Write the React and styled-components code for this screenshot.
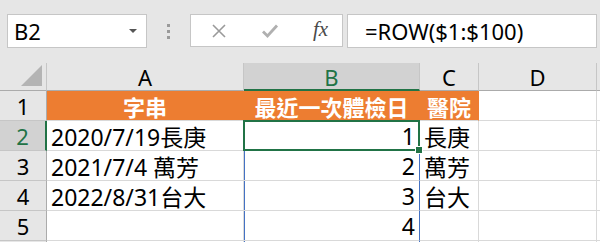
import React from 'react';
import styled, { createGlobalStyle, css } from 'styled-components';

const GlobalStyle = createGlobalStyle`
  html, body {
    margin: 0;
    padding: 0;
    background: #ffffff;
    overflow: hidden;
  }
  body {
    font-family: "Noto Sans", "Noto Sans CJK TC", sans-serif;
  }
`;

const GREEN = '#217346';
const ORANGE = '#ED7D31';
const GRID = '#d9d9d9';

const Window = styled.div`
  width: 600px;
  height: 242px;
  overflow: hidden;
  display: flex;
  flex-direction: column;
`;

/* formula toolbar */
const Toolbar = styled.div`
  height: 63px;
  flex-shrink: 0;
  background: #e6e6e6;
  display: flex;
  align-items: flex-start;
  padding: 14px 0 0 7px;
  box-sizing: border-box;
`;

const NameBox = styled.div`
  width: 140px;
  height: 34px;
  box-sizing: border-box;
  background: #fff;
  border: 1px solid #c6c6c6;
  display: flex;
  align-items: center;
  justify-content: space-between;
  padding: 0 9px 0 6px;
  font-size: 22px;
  color: #000;
`;

const DropArrow = styled.span`
  width: 0;
  height: 0;
  border-left: 4px solid transparent;
  border-right: 4px solid transparent;
  border-top: 4px solid #555;
`;

const Grip = styled.div`
  width: 43px;
  height: 34px;
  display: flex;
  flex-direction: column;
  align-items: center;
  justify-content: center;
  gap: 3px;
`;

const Dot = styled.span`
  width: 3px;
  height: 3px;
  background: #9a9a9a;
`;

const FuncButtons = styled.div`
  width: 153px;
  height: 33px;
  box-sizing: border-box;
  background: #fff;
  border: 1px solid #c6c6c6;
  display: grid;
  grid-template-columns: 53px 50px 1fr;
  align-items: center;
  justify-items: center;
  padding-left: 1px;
`;

const FxLabel = styled.span`
  font-family: "Liberation Serif", "DejaVu Serif", serif;
  font-style: italic;
  font-size: 21px;
  color: #4a4a4a;
  margin-left: 4px;
  margin-top: -2px;
`;

const FormulaInput = styled.div`
  width: 250px;
  height: 34px;
  box-sizing: border-box;
  margin-left: 4px;
  background: #fff;
  border: 1px solid #c6c6c6;
  display: flex;
  align-items: center;
  padding-left: 17px;
  font-size: 22px;
  color: #000;
  white-space: nowrap;
`;

/* sheet */
const Sheet = styled.div`
  display: grid;
  grid-template-columns: 47px 197px 176px 59px 118px 1fr;
  grid-template-rows: 28px repeat(6, 30px);
`;

const Corner = styled.div`
  background: #e6e6e6;
  border-right: 1px solid #c6c6c6;
  border-bottom: 1px solid #ababab;
  position: relative;
  &::after {
    content: '';
    position: absolute;
    right: 4px;
    bottom: 4px;
    width: 0;
    height: 0;
    border-left: 21px solid transparent;
    border-bottom: 21px solid #b4b4b4;
  }
`;

const ColHead = styled.div`
  background: ${p => (p.$active ? '#d2d2d2' : '#e6e6e6')};
  border-right: 1px solid #c6c6c6;
  border-bottom: ${p => (p.$active ? `2px solid ${GREEN}` : '1px solid #ababab')};
  color: ${p => (p.$active ? GREEN : '#000')};
  font-size: 22px;
  line-height: 1;
  display: flex;
  align-items: center;
  justify-content: center;
  padding-top: 1px;
  box-sizing: border-box;
`;

const RowHead = styled.div`
  background: ${p => (p.$active ? '#d2d2d2' : '#e6e6e6')};
  border-right: ${p => (p.$active ? `2px solid ${GREEN}` : '1px solid #ababab')};
  border-bottom: 1px solid #c6c6c6;
  color: ${p => (p.$active ? GREEN : '#000')};
  font-size: 22px;
  display: flex;
  align-items: center;
  justify-content: center;
  box-sizing: border-box;
`;

const Cell = styled.div`
  position: relative;
  background: #fff;
  border-right: 1px solid ${GRID};
  border-bottom: 1px solid ${GRID};
  font-size: 23px;
  color: #000;
  display: flex;
  align-items: center;
  justify-content: ${p => (p.$right ? 'flex-end' : 'flex-start')};
  padding: 0 4px 0 4px;
  white-space: nowrap;
  box-sizing: border-box;

  ${p =>
    p.$header &&
    css`
      background: ${ORANGE};
      border-right-color: ${ORANGE};
      color: #fff;
      font-size: 22px;
      font-weight: 700;
      justify-content: center;
    `}

  ${p =>
    p.$blue &&
    css`
      border-right-color: #4472c4;
      box-shadow: inset 1px 0 0 #4472c4;
    `}

  ${p =>
    p.$selected &&
    css`
      &::after {
        content: '';
        position: absolute;
        left: -1px;
        top: -1px;
        right: -1px;
        bottom: -1px;
        border: 2px solid ${GREEN};
        pointer-events: none;
      }
      &::before {
        content: '';
        position: absolute;
        right: -4px;
        bottom: -4px;
        width: 6px;
        height: 6px;
        background: ${GREEN};
        border: 1px solid #fff;
        z-index: 2;
      }
    `}
`;

const CrossIcon = () => (
  <svg width="16" height="16" viewBox="0 0 16 16">
    <path d="M2 2 L14 14 M14 2 L2 14" stroke="#9a9a9a" strokeWidth="1.6" fill="none" />
  </svg>
);

const CheckIcon = () => (
  <svg width="18" height="16" viewBox="0 0 18 16">
    <path d="M2 8.5 L6.5 13 L16 2.5" stroke="#b0b0b0" strokeWidth="2.8" fill="none" />
  </svg>
);

const columns = ['A', 'B', 'C', 'D', ''];

const rows = [
  { n: 1, a: '字串', b: '最近一次體檢日', c: '醫院', header: true },
  { n: 2, a: '2020/7/19長庚', b: '1', c: '長庚' },
  { n: 3, a: '2021/7/4 萬芳', b: '2', c: '萬芳' },
  { n: 4, a: '2022/8/31台大', b: '3', c: '台大' },
  { n: 5, a: '', b: '4', c: '' },
  { n: 6, a: '', b: '', c: '', hideLabel: true },
];

const App = () => (
  <Window>
    <GlobalStyle />
    <Toolbar>
      <NameBox>
        <span>B2</span>
        <DropArrow />
      </NameBox>
      <Grip>
        <Dot />
        <Dot />
        <Dot />
      </Grip>
      <FuncButtons>
        <CrossIcon />
        <CheckIcon />
        <FxLabel>fx</FxLabel>
      </FuncButtons>
      <FormulaInput>=ROW($1:$100)</FormulaInput>
    </Toolbar>

    <Sheet>
      <Corner />
      {columns.map((c, i) => (
        <ColHead key={i} $active={c === 'B'}>
          {c}
        </ColHead>
      ))}

      {rows.map(r => (
        <React.Fragment key={r.n}>
          <RowHead $active={r.n === 2}>{r.hideLabel ? '' : r.n}</RowHead>
          <Cell $header={r.header}>{r.a}</Cell>
          <Cell
            $header={r.header}
            $right={!r.header}
            $selected={r.n === 2}
            $blue={r.n >= 3}
          >
            {r.b}
          </Cell>
          <Cell $header={r.header}>{r.c}</Cell>
          <Cell />
          <Cell />
        </React.Fragment>
      ))}
    </Sheet>
  </Window>
);

export default App;
